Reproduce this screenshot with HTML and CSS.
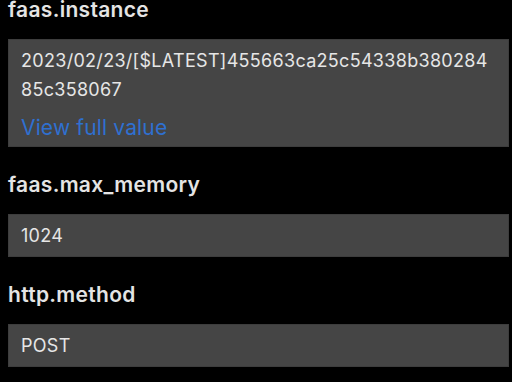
FILE: index.html
```html
<html>
 <head>
  <meta content="width=device-width, initial-scale=1" name="viewport" />
  <link rel="stylesheet" href="styles.css">
 </head>
 <body>
  <div id="attrs">
   <div class="attr">
    <div class="attr-name">faas.instance</div>
    <div class="attr-box">
     <div class="attr-value">2023/02/23/[$LATEST]455663ca25c54338b38028485c358067</div>
     <a class="more" href="#">View full value</a>
    </div>
   </div>
   <div class="attr">
    <div class="attr-name">faas.max_memory</div>
    <div class="attr-box">
     <div class="attr-value">1024</div>
    </div>
   </div>
   <div class="attr">
    <div class="attr-name">http.method</div>
    <div class="attr-box">
     <div class="attr-value">POST</div>
    </div>
   </div>
  </div>
 </body>
</html>
```

FILE: styles.css
```css
body{
  background-color: #000;
  margin: 0;
  padding: 0 3px 0 8px;
  font-family: Inter, "Noto Sans", sans-serif;
  color: #e6e6e6;
}
.attr{
  margin-bottom: 28px;
}
.attr-name{
  font-size: 21px;
  font-weight: 600;
  letter-spacing: 0.3px;
  line-height: 20px;
  color: #e4e4e4;
  margin-bottom: 19px;
}
.attr-box{
  background-color: #454545;
  border: 1px solid #3d3d3d;
  padding: 6px 12px 6px 12px;
}
.attr-value{
  font-size: 18px;
  letter-spacing: 0.3px;
  line-height: 29px;
  word-break: break-all;
}
.more{
  display: block;
  margin-top: 11px;
  font-size: 21px;
  letter-spacing: 0.15px;
  line-height: 25px;
  color: #2f70d0;
  text-decoration: none;
}
```
